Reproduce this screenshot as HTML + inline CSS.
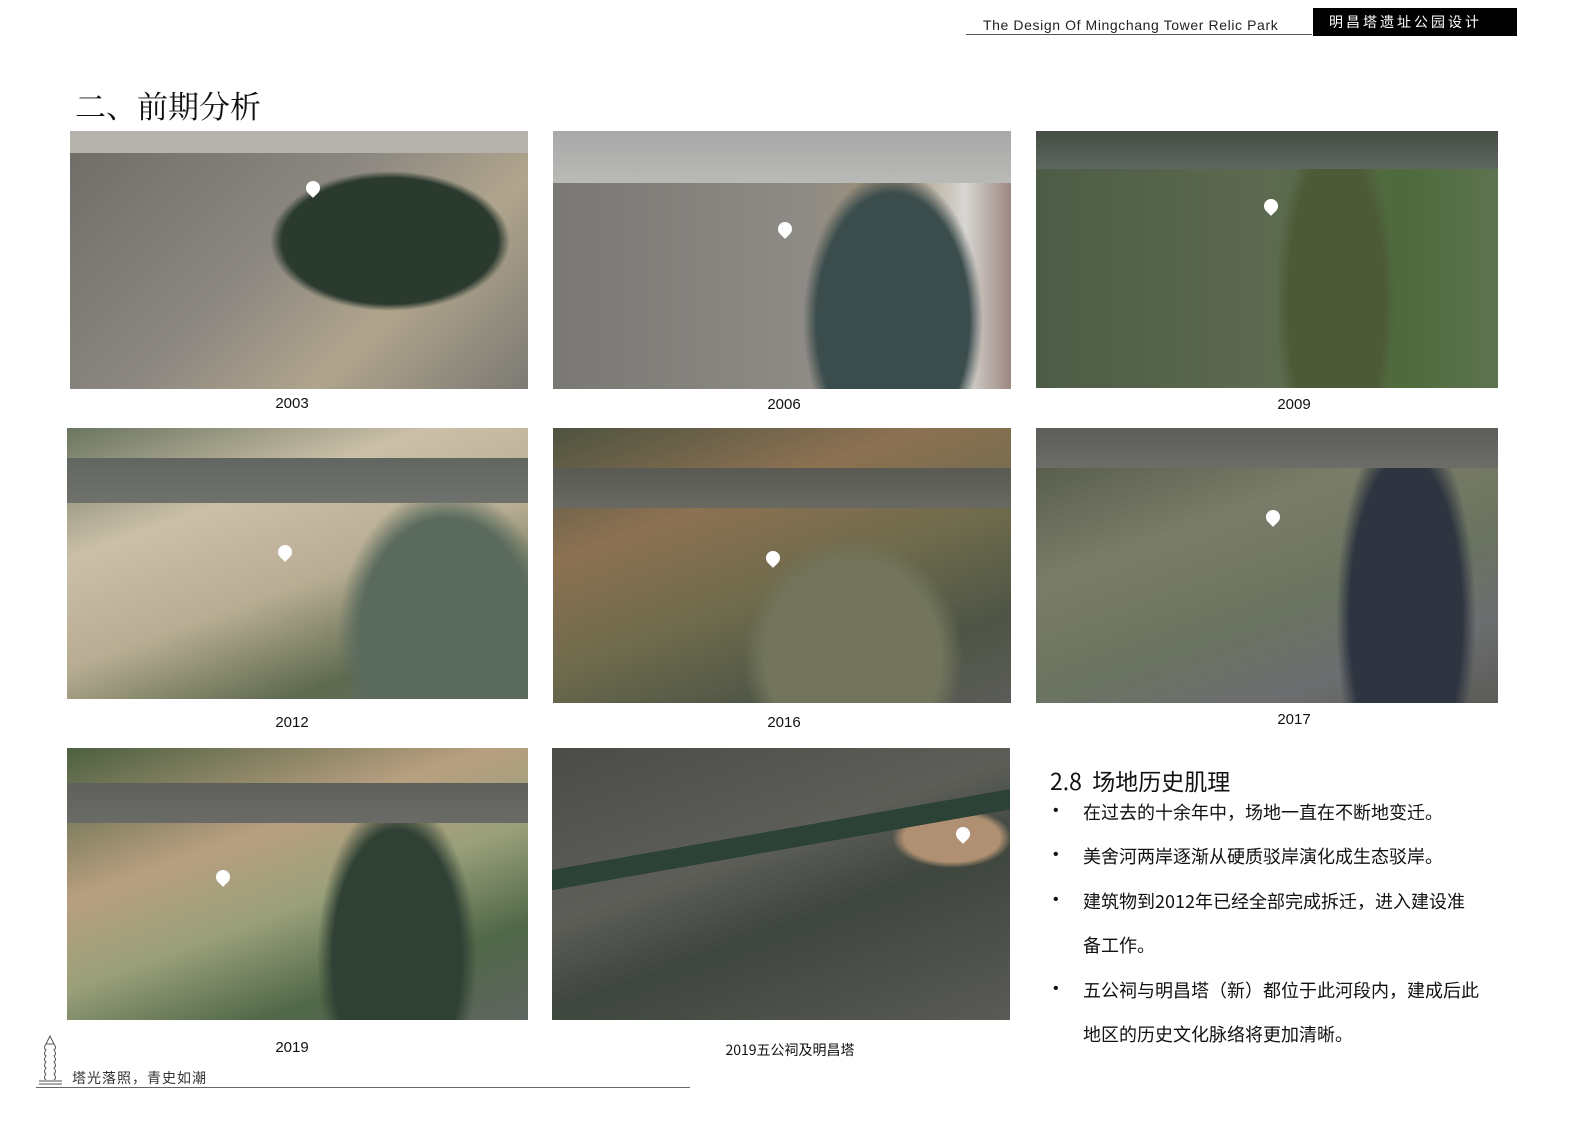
<!DOCTYPE html>
<html><head><meta charset="utf-8"><style>
*{margin:0;padding:0;box-sizing:border-box}
body{width:1587px;height:1123px;background:#fff;position:relative;overflow:hidden;font-family:"Liberation Sans","Noto Sans CJK SC",sans-serif;color:#111}
.a{position:absolute}
.img{position:absolute;overflow:hidden}
.cap{position:absolute;font-size:15px;text-align:center;width:300px}
.pin{position:absolute;width:14px;height:14px;border-radius:50% 50% 50% 0;transform:rotate(-45deg);background:#fff}
.bl{position:absolute;left:1083px;font-size:18px;font-family:"Noto Sans CJK SC",sans-serif}
.dot{position:absolute;left:1053px;font-size:16px}
</style></head><body>
<div class="a" style="left:966px;top:34px;width:346px;height:1px;background:#555"></div>
<div class="a" style="left:983px;top:17px;font-size:14px;letter-spacing:0.6px;color:#222">The Design Of Mingchang Tower Relic Park</div>
<div class="a" style="left:1313px;top:8px;width:204px;height:28px;background:#000;color:#fff;font-size:14px;letter-spacing:3px;padding:4px 0 0 16px;font-family:'Noto Sans CJK SC',sans-serif">明昌塔遗址公园设计</div>
<div class="a" style="left:75px;top:82px;font-size:31px;font-family:'Noto Serif CJK SC','Noto Sans CJK SC',serif">二、前期分析</div>

<div class="img" style="left:70px;top:131px;width:458px;height:258px;background:linear-gradient(#b5b3ab 0,#b5b3ab 22px,transparent 22px),radial-gradient(ellipse 120px 70px at 320px 110px,#2a3a2e 90%,transparent 100%),linear-gradient(135deg,#6f6b66,#8c8881 45%,#b0a48c 70%,#7c7a74)"></div>
<div class="img" style="left:553px;top:131px;width:458px;height:258px;background:linear-gradient(#a8a9a8 0,#b9b9b6 52px,transparent 52px),radial-gradient(ellipse 90px 150px at 340px 190px,#3a4c4c 85%,transparent 100%),linear-gradient(90deg,#7a7874,#8e8b86 55%,#a49378 75%,#d8d6d2 90%,#9c8880)"></div>
<div class="img" style="left:1036px;top:131px;width:462px;height:257px;background:linear-gradient(#454d44 0,#5f6660 38px,transparent 38px),radial-gradient(ellipse 60px 180px at 300px 170px,#4c5a36 80%,transparent 100%),linear-gradient(90deg,#4d5c46,#5d6a50 50%,#4e6b3c 80%,#5d7350)"></div>

<div class="img" style="left:67px;top:428px;width:461px;height:271px;background:linear-gradient(transparent 30px,#626660 30px,#6e716c 75px,transparent 75px),radial-gradient(ellipse 110px 150px at 380px 210px,#5a6b5e 80%,transparent 100%),linear-gradient(160deg,#6a7560,#cbbfa8 30%,#b8ad93 55%,#5e6a4e 80%,#6d6f6b)"></div>
<div class="img" style="left:553px;top:428px;width:458px;height:275px;background:linear-gradient(transparent 40px,#5a5a54 40px,#696962 80px,transparent 80px),radial-gradient(ellipse 110px 120px at 300px 230px,#72755c 80%,transparent 100%),linear-gradient(160deg,#4e5340,#8c7152 30%,#6f6b4c 55%,#4e5546 80%,#5b5c58)"></div>
<div class="img" style="left:1036px;top:428px;width:462px;height:275px;background:linear-gradient(#5c5c58 0,#6c6c68 40px,transparent 40px),radial-gradient(ellipse 70px 200px at 370px 190px,#2e3440 80%,transparent 100%),linear-gradient(160deg,#4e5444,#7a7c68 35%,#6b7460 60%,#6c6e70 80%,#5b5c58)"></div>

<div class="img" style="left:67px;top:748px;width:461px;height:272px;background:linear-gradient(transparent 35px,#5e605c 35px,#6a6b66 75px,transparent 75px),radial-gradient(ellipse 80px 160px at 330px 210px,#2f4034 80%,transparent 100%),linear-gradient(160deg,#4c6040,#b89f80 35%,#9aa07a 55%,#506848 78%,#5f6560)"></div>
<div class="img" style="left:552px;top:748px;width:458px;height:272px;background:linear-gradient(170deg,transparent 120px,#2d4236 120px,#2d4236 140px,transparent 140px),radial-gradient(ellipse 60px 30px at 400px 90px,#b09072 80%,transparent 100%),linear-gradient(160deg,#4a4c48,#5d5e58 40%,#3e463e 60%,#5a5a56)"></div>

<div class="pin" style="left:306px;top:181px"></div>
<div class="pin" style="left:778px;top:222px"></div>
<div class="pin" style="left:1264px;top:199px"></div>
<div class="pin" style="left:278px;top:545px"></div>
<div class="pin" style="left:766px;top:551px"></div>
<div class="pin" style="left:1266px;top:510px"></div>
<div class="pin" style="left:216px;top:870px"></div>
<div class="pin" style="left:956px;top:827px"></div>

<div class="cap" style="left:142px;top:395px">2003</div>
<div class="cap" style="left:634px;top:396px">2006</div>
<div class="cap" style="left:1144px;top:396px">2009</div>
<div class="cap" style="left:142px;top:714px">2012</div>
<div class="cap" style="left:634px;top:714px">2016</div>
<div class="cap" style="left:1144px;top:711px">2017</div>
<div class="cap" style="left:142px;top:1039px">2019</div>
<div class="cap" style="left:640px;top:1040px;font-family:'Noto Sans CJK SC',sans-serif;font-size:14px">2019五公祠及明昌塔</div>

<div class="a" style="left:1050px;top:763px;font-size:23px;font-family:'Noto Sans CJK SC',sans-serif">2.8&nbsp; 场地历史肌理</div>
<div class="dot" style="top:802px">•</div><div class="bl" style="top:799px">在过去的十余年中，场地一直在不断地变迁。</div>
<div class="dot" style="top:846px">•</div><div class="bl" style="top:843px">美舍河两岸逐渐从硬质驳岸演化成生态驳岸。</div>
<div class="dot" style="top:891px">•</div><div class="bl" style="top:888px">建筑物到2012年已经全部完成拆迁，进入建设准</div>
<div class="bl" style="top:932px">备工作。</div>
<div class="dot" style="top:980px">•</div><div class="bl" style="top:977px">五公祠与明昌塔（新）都位于此河段内，建成后此</div>
<div class="bl" style="top:1021px">地区的历史文化脉络将更加清晰。</div>

<svg class="a" style="left:36px;top:1034px" width="30" height="54" viewBox="0 0 30 54" fill="none" stroke="#555" stroke-width="1">
<path d="M14 2 L10 10 L18 10 Z M10 10 Q7 14 10 16 Q7 20 10 22 Q7 26 10 28 Q7 32 10 34 Q7 38 10 40 Q7 44 10 46 M18 10 Q21 14 18 16 Q21 20 18 22 Q21 26 18 28 Q21 32 18 34 Q21 38 18 40 Q21 44 18 46 M3 50 H26 M3 47 H26"/></svg>
<div class="a" style="left:72px;top:1068px;font-size:14px;letter-spacing:1px;font-family:'Noto Sans CJK SC',sans-serif;color:#333">塔光落照，青史如潮</div>
<div class="a" style="left:36px;top:1087px;width:654px;height:1px;background:#666"></div>
</body></html>
